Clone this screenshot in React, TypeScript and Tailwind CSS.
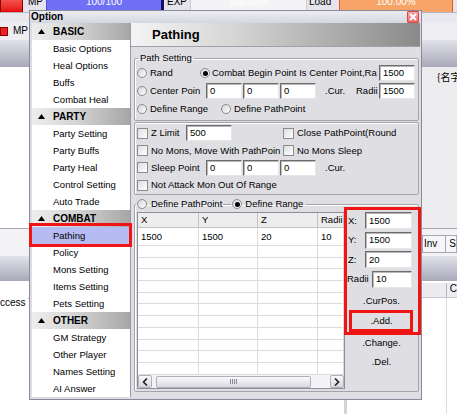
import React from 'react';

type NavItem = string | { h: string };

const nav: NavItem[] = [
  { h: 'BASIC' }, 'Basic Options', 'Heal Options', 'Buffs', 'Combat Heal',
  { h: 'PARTY' }, 'Party Setting', 'Party Buffs', 'Party Heal', 'Control Setting', 'Auto Trade',
  { h: 'COMBAT' }, 'Pathing', 'Policy', 'Mons Setting', 'Items Setting', 'Pets Setting',
  { h: 'OTHER' }, 'GM Strategy', 'Other Player', 'Names Setting', 'AI Answer',
];

const Radio = ({ on = false }: { on?: boolean }) => (
  <span className="flex h-[10px] w-[10px] shrink-0 items-center justify-center rounded-full border border-[#8c8c8c] bg-gradient-to-br from-[#d4d4d4] to-white">
    {on && <span className="h-[5px] w-[5px] rounded-full bg-black" />}
  </span>
);

const Check = () => (
  <span className="h-[11px] w-[11px] shrink-0 border border-[#8c8c8c] bg-gradient-to-br from-[#dedede] to-white" />
);

const Field = ({ value, className }: { value: string; className: string }) => (
  <div className={`flex h-[16px] shrink-0 items-center border border-[#e6e6e6] border-l-[#6c6c6c] border-t-[#6c6c6c] bg-white pl-[3px] leading-none shadow-[inset_1px_1px_0_#b8b8b8] ${className}`}>
    {value}
  </div>
);

const ScrollBtn = ({ left }: { left?: boolean }) => (
  <div className="flex h-[13px] w-[14px] shrink-0 items-center justify-center rounded-[2px] border border-[#b0b0bc] bg-gradient-to-b from-[#fafafc] to-[#d6d6de]">
    <svg width="6" height="8" viewBox="0 0 6 8">
      <path d={left ? 'M5 0.5 L1.5 4 L5 7.5' : 'M1 0.5 L4.5 4 L1 7.5'} stroke="#202020" strokeWidth="1.6" fill="none" />
    </svg>
  </div>
);

function StatusBar() {
  return (
    <div className="flex h-[13px] overflow-hidden border-b border-[#b4b4c2] bg-[#e4e4ea]">
      <div className="-mt-[10px] flex h-[23px] items-center text-[10px]">
        <div className="h-full w-[23px] border border-[#900000] bg-gradient-to-b from-[#ff7070] to-[#e40000]" />
        <span className="ml-[5px] w-[18px]">MP</span>
        <div className="flex h-full w-[118px] items-center justify-center border border-[#5050d0] border-r-[3px] border-r-[#101070] bg-[#7070f6] text-white">100/100</div>
        <span className="ml-[3px] w-[23px]">EXP</span>
        <div className="flex h-full w-[117px] items-center justify-center border border-[#c8c8d2] bg-[#f4f4f6] text-white">100.00%</div>
        <span className="ml-[2px] w-[30px]">Load</span>
        <div className="flex h-full w-[114px] items-center justify-center border border-[#e0582a] bg-[#f8a468] text-white">100.00%</div>
      </div>
    </div>
  );
}

function Background() {
  return (
    <div className="flex h-full flex-col">
      <StatusBar />
      <div className="h-[9px] bg-[#e8e8ee]" />
      <div className="flex h-[18px] items-center bg-[#eeeef2] text-[10px]">
        <div className="h-[9px] w-[8px] border border-[#900000] bg-[#f02020]" />
        <span className="ml-[5px]">MP</span>
      </div>
      <div className="h-[27px] bg-gradient-to-b from-[#e2e2ea] to-[#a8a8ba]" />
      <div className="flex h-[161px]">
        <div className="flex-1 bg-white" />
        <div className="w-[35px] bg-[#ededf0] pl-[15px] pt-[4px] font-['Noto_Sans_CJK_SC',sans-serif] text-[10px] whitespace-nowrap">{'{名字'}</div>
      </div>
      <div className="flex h-[28px] border-t border-[#a8a8b6] bg-[#f3f3f6]">
        <div className="flex-1" />
        <div className="flex w-[35px] items-start pt-[6px] text-[10px]">
          <div className="flex h-[18px] w-[25px] items-center border border-[#a8a8b6] bg-[#f7f7f9] pl-[1px]">Inv</div>
          <div className="flex h-[18px] flex-1 items-center border border-l-0 border-[#a8a8b6] bg-[#f7f7f9] pl-[3px]">S</div>
        </div>
      </div>
      <div className="h-[25px] bg-gradient-to-b from-[#e2e2ea] to-[#a8a8ba]" />
      <div className="flex flex-1">
        <div className="w-[344px] bg-white pt-[16px] text-[10px] whitespace-nowrap">ccess Te</div>
        <div className="w-[3px] bg-[#d4d4da]" />
        <div className="flex flex-1 flex-col bg-white text-[10px]">
          <div className="mt-[2px] flex h-[15px] border-b border-[#c8c8d0] bg-[#ececf0]">
            <div className="w-[100px] border-r border-[#b8b8c2]" />
            <span className="pl-[3px]">C</span>
          </div>
          <div className="flex flex-1">
            <div className="w-[100px] border-r border-[#dcdce0]" />
          </div>
        </div>
      </div>
    </div>
  );
}

function NavPanel() {
  return (
    <div className="w-[99px] shrink-0 border-r border-[#9a9aa6] bg-white">
      {nav.map((item, i) =>
        typeof item === 'string' ? (
          <div
            key={i}
            className={`flex h-[17px] items-center pl-[21px] whitespace-nowrap ${item === 'Pathing' ? 'bg-[#b6bcf2]' : ''}`}
          >
            {item}
          </div>
        ) : (
          <div
            key={i}
            className="flex h-[17px] items-center bg-[linear-gradient(to_right,#ededed_0%,#d4d4d4_45%,#a6a6a6_100%)] pl-[6px] text-[10px] font-bold"
          >
            <svg width="7" height="5" viewBox="0 0 7 5" className="mr-[8px]">
              <path d="M0 5 L3.5 0 L7 5 Z" fill="#000" />
            </svg>
            {item.h}
          </div>
        ),
      )}
    </div>
  );
}

function PathTable() {
  const cols = ['X', 'Y', 'Z', 'Radii'];
  const widths = ['w-[61px]', 'w-[59px]', 'w-[60px]', 'flex-1'];
  const first = ['1500', '1500', '20', '10'];
  return (
    <div className="ml-[2px] mt-[2px] flex h-[177px] w-[208px] shrink-0 flex-col overflow-hidden border border-[#8e8e9a] bg-white">
      <div className="flex h-[15px] shrink-0 bg-[#ededed]">
        {cols.map((c, i) => (
          <div key={c} className={`${widths[i]} flex items-center overflow-hidden border-b border-r border-[#c2c2c2] pl-[3px] whitespace-nowrap`}>
            {c}
          </div>
        ))}
      </div>
      <div className="flex-1 overflow-hidden">
        <div className="flex h-[18px]">
          {first.map((v, i) => (
            <div key={i} className={`${widths[i]} flex items-center border-b border-r border-[#dcdcdc] pl-[3px]`}>
              {v}
            </div>
          ))}
        </div>
        {Array.from({ length: 11 }).map((_, r) => (
          <div key={r} className="flex h-[11.7px]">
            {widths.map((w, i) => (
              <div key={i} className={`${w} border-b border-r border-[#dcdcdc]`} />
            ))}
          </div>
        ))}
      </div>
      <div className="flex h-[13px] shrink-0 items-center bg-[#f3f3f5]">
        <ScrollBtn left />
        <div className="ml-[4px] flex h-[12px] w-[155px] items-center justify-center gap-[1px] rounded-[2px] border border-[#b0b0bc] bg-gradient-to-b from-[#fafafc] to-[#d8d8e0]">
          <span className="h-[5px] w-px bg-[#8a8a96]" />
          <span className="h-[5px] w-px bg-[#8a8a96]" />
          <span className="h-[5px] w-px bg-[#8a8a96]" />
          <span className="h-[5px] w-px bg-[#8a8a96]" />
        </div>
        <div className="flex-1" />
        <ScrollBtn />
      </div>
    </div>
  );
}

function PathingPanel() {
  return (
    <div className="flex flex-1 flex-col">
      <div className="flex h-[24px] shrink-0 items-center border-b border-[#a0a0a8] bg-[linear-gradient(to_right,#f4f4f4_0%,#d6d6d6_35%,#8a8a8a_100%)] pl-[21px] text-[13px] font-bold">
        Pathing
      </div>
      <div className="flex flex-1 flex-col bg-[#dfdfe3] pl-[3px] pr-[1px]">
        <fieldset className="mt-[5px] rounded-[2px] border border-[#a4a4a8] pb-[2px] shadow-[inset_1px_1px_0_#fff]">
          <legend className="ml-[3px] px-[2px] leading-[12px]">Path Setting</legend>
          <div className="flex h-[18px] items-center pl-[2px]">
            <div className="flex w-[63px] items-center gap-[3px]"><Radio />Rand</div>
            <Radio on />
            <span className="ml-[2px] w-[165px] overflow-hidden whitespace-nowrap">Combat Begin Point Is Center Point,Ra</span>
            <Field value="1500" className="ml-[2px] w-[36px]" />
          </div>
          <div className="flex h-[18px] items-center pl-[2px]">
            <Radio />
            <span className="ml-[3px] w-[53px] overflow-hidden whitespace-nowrap">Center Poin</span>
            <Field value="0" className="ml-[3px] w-[36px]" />
            <Field value="0" className="ml-[1px] w-[36px]" />
            <Field value="0" className="ml-[1px] w-[36px]" />
            <span className="ml-[9px] w-[31px]">.Cur.</span>
            <span className="w-[23px]">Radii</span>
            <Field value="1500" className="w-[36px]" />
          </div>
          <div className="flex h-[18px] items-center pl-[2px]">
            <div className="flex w-[84px] items-center gap-[3px]"><Radio />Define Range</div>
            <div className="flex items-center gap-[3px]"><Radio />Define PathPoint</div>
          </div>
        </fieldset>

        <fieldset className="mt-[1px] rounded-[2px] border border-[#a4a4a8] pt-[1px] shadow-[inset_1px_1px_0_#fff]">
          <div className="flex h-[18px] items-center pl-[2px]">
            <div className="flex w-[49px] items-center gap-[3px]"><Check />Z Limit</div>
            <Field value="500" className="w-[46px]" />
            <div className="ml-[51px] flex items-center gap-[3px]"><Check /><span className="w-[100px] overflow-hidden whitespace-nowrap">Close PathPoint(Round</span></div>
          </div>
          <div className="flex h-[17px] items-center pl-[2px]">
            <div className="flex w-[146px] items-center gap-[3px]"><Check /><span className="w-[130px] overflow-hidden whitespace-nowrap">No Mons, Move With PathPoin</span></div>
            <div className="flex items-center gap-[3px]"><Check />No Mons Sleep</div>
          </div>
          <div className="flex h-[17px] items-center pl-[2px]">
            <div className="flex w-[69px] items-center gap-[3px]"><Check />Sleep Point</div>
            <Field value="0" className="w-[36px]" />
            <Field value="0" className="ml-[1px] w-[36px]" />
            <Field value="0" className="ml-[1px] w-[36px]" />
            <span className="ml-[9px]">.Cur.</span>
          </div>
          <div className="flex h-[18px] items-center pl-[2px]">
            <div className="flex items-center gap-[3px]"><Check />Not Attack Mon Out Of Range</div>
          </div>
        </fieldset>

        <fieldset className="mt-[3px] rounded-[2px] border border-[#a4a4a8] pb-[2px] shadow-[inset_1px_1px_0_#fff]">
          <legend className="ml-[1px] leading-[12px]">
            <div className="flex items-center px-[1px]">
              <Radio />
              <span className="ml-[4px]">Define PathPoint</span>
              <span className="mx-[1px] h-px w-[8px] bg-[#a4a4a8]" />
              <Radio on />
              <span className="ml-[3px] pr-[2px]">Define Range</span>
            </div>
          </legend>
          <div className="flex">
            <PathTable />
            <div className="flex flex-1 flex-col pt-[2px]">
              <div className="flex flex-col gap-[2.5px]">
                <div className="flex h-[17px] items-center pl-[3px]"><span className="w-[17px]">X:</span><Field value="1500" className="h-[17px] w-[47px]" /></div>
                <div className="flex h-[17px] items-center pl-[3px]"><span className="w-[17px]">Y:</span><Field value="1500" className="h-[17px] w-[47px]" /></div>
                <div className="flex h-[17px] items-center pl-[3px]"><span className="w-[17px]">Z:</span><Field value="20" className="h-[17px] w-[47px]" /></div>
                <div className="flex h-[17px] items-center pl-[2px]"><span className="w-[25px]">Radii</span><Field value="10" className="h-[17px] w-[40px]" /></div>
              </div>
              <div className="mt-[3px] flex h-[20px] items-center justify-center">.CurPos.</div>
              <div className="flex h-[20px] items-center justify-center">.Add.</div>
              <div className="mt-[1px] flex h-[22px] items-center justify-center">.Change.</div>
              <div className="flex h-[17px] items-center justify-center">.Del.</div>
            </div>
          </div>
        </fieldset>
      </div>
    </div>
  );
}

export default function App() {
  return (
    <div className="relative h-[414px] w-[457px] overflow-hidden bg-white font-['Liberation_Sans',Arial,sans-serif] text-[9.5px] leading-[12px] text-black">
      <Background />

      {/* Option window */}
      <div className="absolute left-[29px] top-[10px] flex h-[390px] w-[393px] flex-col border border-[#8a8a9a] bg-[#dcdce2]">
        <div className="flex h-[12px] shrink-0 items-center justify-between bg-gradient-to-b from-[#ececf2] to-[#d6d6e0] pl-[1px] pr-[2px]">
          <span className="text-[10px] font-bold leading-none">Option</span>
          <div className="-mt-[1px] flex h-[12px] w-[12px] items-center justify-center rounded-[1px] border border-[#d84848] bg-gradient-to-b from-[#f8a8a8] to-[#ec6a6a]">
            <svg width="8" height="8" viewBox="0 0 8 8">
              <path d="M1 1 L7 7 M7 1 L1 7" stroke="#fff" strokeWidth="1.8" />
            </svg>
          </div>
        </div>
        <div className="flex h-[374px] pl-[2px] pr-[1px]">
          <NavPanel />
          <PathingPanel />
        </div>
      </div>

      {/* red highlight marks */}
      <div className="absolute left-[29px] top-[223px] h-[24px] w-[103px] border-[3px] border-[#f01414]" />
      <div className="absolute left-[344px] top-[207px] h-[128px] w-[77px] border-[3px] border-[#f01414]" />
      <div className="absolute left-[349px] top-[310px] h-[22px] w-[64px] border-[3px] border-[#f01414]" />
    </div>
  );
}
